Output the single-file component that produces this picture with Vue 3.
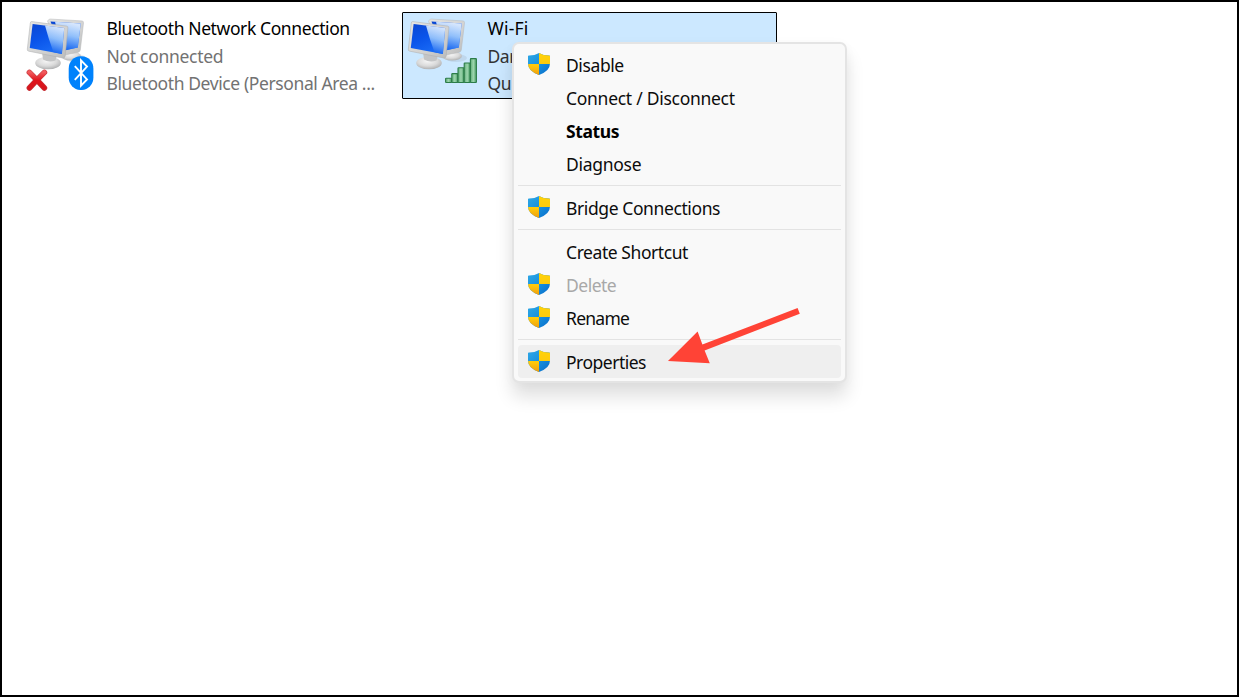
<template>
  <div class="window">
    <div class="connections">
      <div
        v-for="item in connections"
        :key="item.name"
        class="tile"
        :class="{ selected: item.selected }"
      >
        <svg class="tile-icon" viewBox="24 14 74 78" width="74" height="78">
          <defs>
            <linearGradient :id="item.type + '-screen'" x1="0" y1="0" x2="0.55" y2="1">
              <stop offset="0" stop-color="#0a46d2" />
              <stop offset="0.5" stop-color="#0a54ea" />
              <stop offset="1" stop-color="#1a6cf6" />
            </linearGradient>
            <linearGradient :id="item.type + '-glare'" x1="0.3" y1="0" x2="0.1" y2="1">
              <stop offset="0" stop-color="#e6f2ff" />
              <stop offset="0.4" stop-color="#9cc8fc" />
              <stop offset="0.9" stop-color="#1464f0" />
            </linearGradient>
            <linearGradient :id="item.type + '-frame'" x1="0" y1="0" x2="1" y2="1">
              <stop offset="0" stop-color="#e6e6e4" />
              <stop offset="0.6" stop-color="#d2d2d1" />
              <stop offset="1" stop-color="#b9baba" />
            </linearGradient>
            <radialGradient :id="item.type + '-base'" cx="0.45" cy="0.35" r="0.65">
              <stop offset="0" stop-color="#f6f6f6" />
              <stop offset="0.6" stop-color="#dadada" />
              <stop offset="1" stop-color="#b0b1b2" />
            </radialGradient>
            <linearGradient id="bars" x1="0" y1="0" x2="1" y2="0">
              <stop offset="0" stop-color="#5fac78" />
              <stop offset="0.5" stop-color="#9dd6ae" />
              <stop offset="1" stop-color="#4c9d66" />
            </linearGradient>
            <linearGradient id="cross" x1="0" y1="0" x2="0" y2="1">
              <stop offset="0" stop-color="#f0595c" />
              <stop offset="0.5" stop-color="#e0141c" />
              <stop offset="1" stop-color="#d6161d" />
            </linearGradient>
          </defs>

          <!-- back monitor -->
          <ellipse cx="75" cy="58" rx="11" ry="4" fill="#8a97a4" opacity="0.2" />
          <ellipse cx="71" cy="56" rx="10" ry="4.6" :fill="`url(#${item.type}-base)`" />
          <path d="M49.5 19 82 20.9q1.7.2 1.5 2L80.3 50q-.3 2-2.1 2.3L62 55.5 47.5 21Z" :fill="`url(#${item.type}-frame)`" stroke="#b4b6b8" stroke-width="0.5" />
          <path d="M50.5 21.4 80.7 23.5 77.8 47.4 62 51Z" :fill="`url(#${item.type}-screen)`" />
          <path d="M55 21.7 80.7 23.5 77.8 47.4 62 51Z" :fill="`url(#${item.type}-glare)`" opacity="0.92" />

          <!-- front monitor -->
          <ellipse cx="48" cy="63" rx="12.8" ry="6.3" :fill="`url(#${item.type}-base)`" />
          <path d="M42 52 57 55 55.5 60.5Q49 63 43 59.5Z" fill="#c3c4c5" />
          <path d="M31.8 21.6 66.6 26.1q1.5.3 1.3 1.8L65.2 56q-.3 2.4-2.5 2L28.8 51.2q-1.8-.4-1.5-2L30.3 23q.2-1.6 1.5-1.4Z" :fill="`url(#${item.type}-frame)`" stroke="#abadaf" stroke-width="0.5" />
          <path d="M32.6 24 64.2 28.1 61.9 53.9 29.8 47.9Z" :fill="`url(#${item.type}-screen)`" />
          <path d="M45 25.6 64.2 28.1 61.9 53.9 53.5 52.3Q48.5 39 45 25.6Z" :fill="`url(#${item.type}-glare)`" opacity="0.9" />

          <template v-if="item.type === 'bluetooth'">
            <path d="M29.4 72.4 36.9 80 44.4 72.4M36.9 80 29.4 88M36.9 80 44.4 88" fill="none" stroke="#c5343a" stroke-width="5.6" stroke-linecap="round" />
            <path d="M29.4 72.4 36.9 80 44.4 72.4M36.9 80 29.4 88M36.9 80 44.4 88" fill="none" stroke="url(#cross)" stroke-width="4.4" stroke-linecap="round" />
            <rect x="68.7" y="56.2" width="24.7" height="33.8" rx="11.6" ry="12.5" fill="#0082fc" />
            <path d="M74.8 66.2 87 79.4 81 85.6V60.4L87 66.6 74.8 79.8" fill="none" stroke="#fff" stroke-width="1.9" stroke-linejoin="miter" />
          </template>
          <template v-else>
            <g fill="url(#bars)" stroke="#2c7c48" stroke-width="1.1">
              <rect x="64.6" y="78.2" width="6" height="4.3" rx="0.6" />
              <rect x="70.8" y="73.6" width="6" height="8.9" rx="0.6" />
              <rect x="77" y="67.8" width="6" height="14.7" rx="0.6" />
              <rect x="83.2" y="63" width="6" height="19.5" rx="0.6" />
              <rect x="89.4" y="58.6" width="6" height="23.9" rx="0.6" />
            </g>
          </template>
        </svg>
        <div class="tile-text">
          <span class="name" :class="item.type">{{ item.name }}</span>
          <span class="status">{{ item.status }}</span>
          <span class="device">{{ item.device }}</span>
        </div>
      </div>
    </div>

    <div class="menu">
      <template v-for="(group, index) in menu" :key="index">
        <div v-if="index > 0" class="separator"></div>
        <div
          v-for="entry in group"
          :key="entry.label"
          class="menu-item"
          :class="{ bold: entry.bold, disabled: entry.disabled, active: entry.active }"
        >
          <span class="menu-icon">
            <svg v-if="entry.shield" viewBox="0 0 22 22" width="22" height="22">
              <defs>
                <clipPath id="shield">
                  <path d="M11 0Q15.6 2.7 21.2 2.6 22 2.6 22 3.4V10.6Q22 18.2 11 22 0 18.2 0 10.6V3.4Q0 2.6.8 2.6 6.4 2.7 11 0Z" />
                </clipPath>
                <linearGradient id="shield-blue" x1="0" y1="0" x2="1" y2="1">
                  <stop offset="0" stop-color="#30a8e6" />
                  <stop offset="0.5" stop-color="#1791de" />
                  <stop offset="1" stop-color="#0a6cc9" />
                </linearGradient>
                <linearGradient id="shield-gold" x1="0" y1="0" x2="0" y2="1">
                  <stop offset="0" stop-color="#ffd20a" />
                  <stop offset="0.55" stop-color="#ffca0a" />
                  <stop offset="1" stop-color="#ee9e10" />
                </linearGradient>
              </defs>
              <g clip-path="url(#shield)">
                <rect width="22" height="22" fill="url(#shield-blue)" />
                <path d="M11 0H22V11H0V22H11Z" fill="url(#shield-gold)" />
              </g>
            </svg>
          </span>
          <span class="label" :style="{ letterSpacing: entry.spacing + 'px' }">{{ entry.label }}</span>
        </div>
      </template>
    </div>

    <svg class="pointer" viewBox="660 300 150 75" width="150" height="75">
      <path d="M797.6 308 799.8 313.8 704.6 350.4 709.8 363.2 668 361 697.6 331.6 702.4 344.6Z" fill="#ff4336" />
    </svg>
  </div>
</template>

<script setup>
const connections = [
  {
    type: 'bluetooth',
    name: 'Bluetooth Network Connection',
    status: 'Not connected',
    device: 'Bluetooth Device (Personal Area ...',
    selected: false
  },
  {
    type: 'wifi',
    name: 'Wi-Fi',
    status: 'Dar',
    device: 'Qu',
    selected: true
  }
]

const menu = [
  [
    { label: 'Disable', shield: true, spacing: -0.4 },
    { label: 'Connect / Disconnect', spacing: -0.28 },
    { label: 'Status', bold: true, spacing: -0.4 },
    { label: 'Diagnose', spacing: -0.28 }
  ],
  [{ label: 'Bridge Connections', shield: true, spacing: -0.4 }],
  [
    { label: 'Create Shortcut', spacing: -0.43 },
    { label: 'Delete', shield: true, disabled: true, spacing: -0.5 },
    { label: 'Rename', shield: true, spacing: -0.75 }
  ],
  [{ label: 'Properties', shield: true, active: true, spacing: -0.5 }]
]
</script>

<style>
body {
  margin: 0;
  background: #fff;
}
</style>

<style scoped>
.window {
  position: relative;
  box-sizing: border-box;
  width: 1239px;
  height: 697px;
  padding: 10px 19px;
  overflow: hidden;
  background: #fff;
  border: 2px solid #000;
  font-family: "Noto Sans", "Open Sans", sans-serif;
  font-size: 17.5px;
  color: #000;
}

.connections {
  display: flex;
  gap: 6px;
}

.tile {
  display: flex;
  box-sizing: border-box;
  width: 375px;
  height: 87px;
  padding: 1px 2px;
  border: 1px solid transparent;
  border-radius: 1px;
}

.tile.selected {
  background: #cce8ff;
  border-color: #000;
}

.tile-icon {
  flex: none;
}

.tile-text {
  display: flex;
  flex-direction: column;
  padding: 1px 0 0 8.5px;
  line-height: 27.5px;
  letter-spacing: -0.4px;
  white-space: nowrap;
  color: #727272;
}

.name {
  color: #000;
}

.name.wifi {
  letter-spacing: 0.2px;
}

.bluetooth + .status {
  letter-spacing: -0.3px;
}

.selected .tile-text {
  color: #333;
}

.menu {
  position: absolute;
  left: 510px;
  top: 40px;
  box-sizing: border-box;
  width: 335px;
  height: 341px;
  padding: 4px;
  background: #f9f9f9;
  border: 2px solid #e4e4e4;
  border-radius: 7px;
  box-shadow: 0 14px 18px rgba(0, 0, 0, 0.12), 0 2px 12px rgba(0, 0, 0, 0.03);
}

.menu-item {
  display: flex;
  align-items: center;
  height: 33px;
  border-radius: 4px;
  color: #0c0c0c;
}

.menu-icon {
  display: flex;
  width: 22px;
  height: 22px;
  margin: 0 16px 1px 10px;
}

.label {
  line-height: 33px;
  padding-top: 1px;
  white-space: nowrap;
}

.separator {
  height: 1px;
  margin: 5px 0;
  background: #e3e3e3;
}

.menu-item.bold {
  font-weight: 700;
  color: #000;
}

.menu-item.disabled {
  color: #a8a8a8;
}

.active {
  background: #efefef;
}

.pointer {
  position: absolute;
  left: 658px;
  top: 298px;
}
</style>
